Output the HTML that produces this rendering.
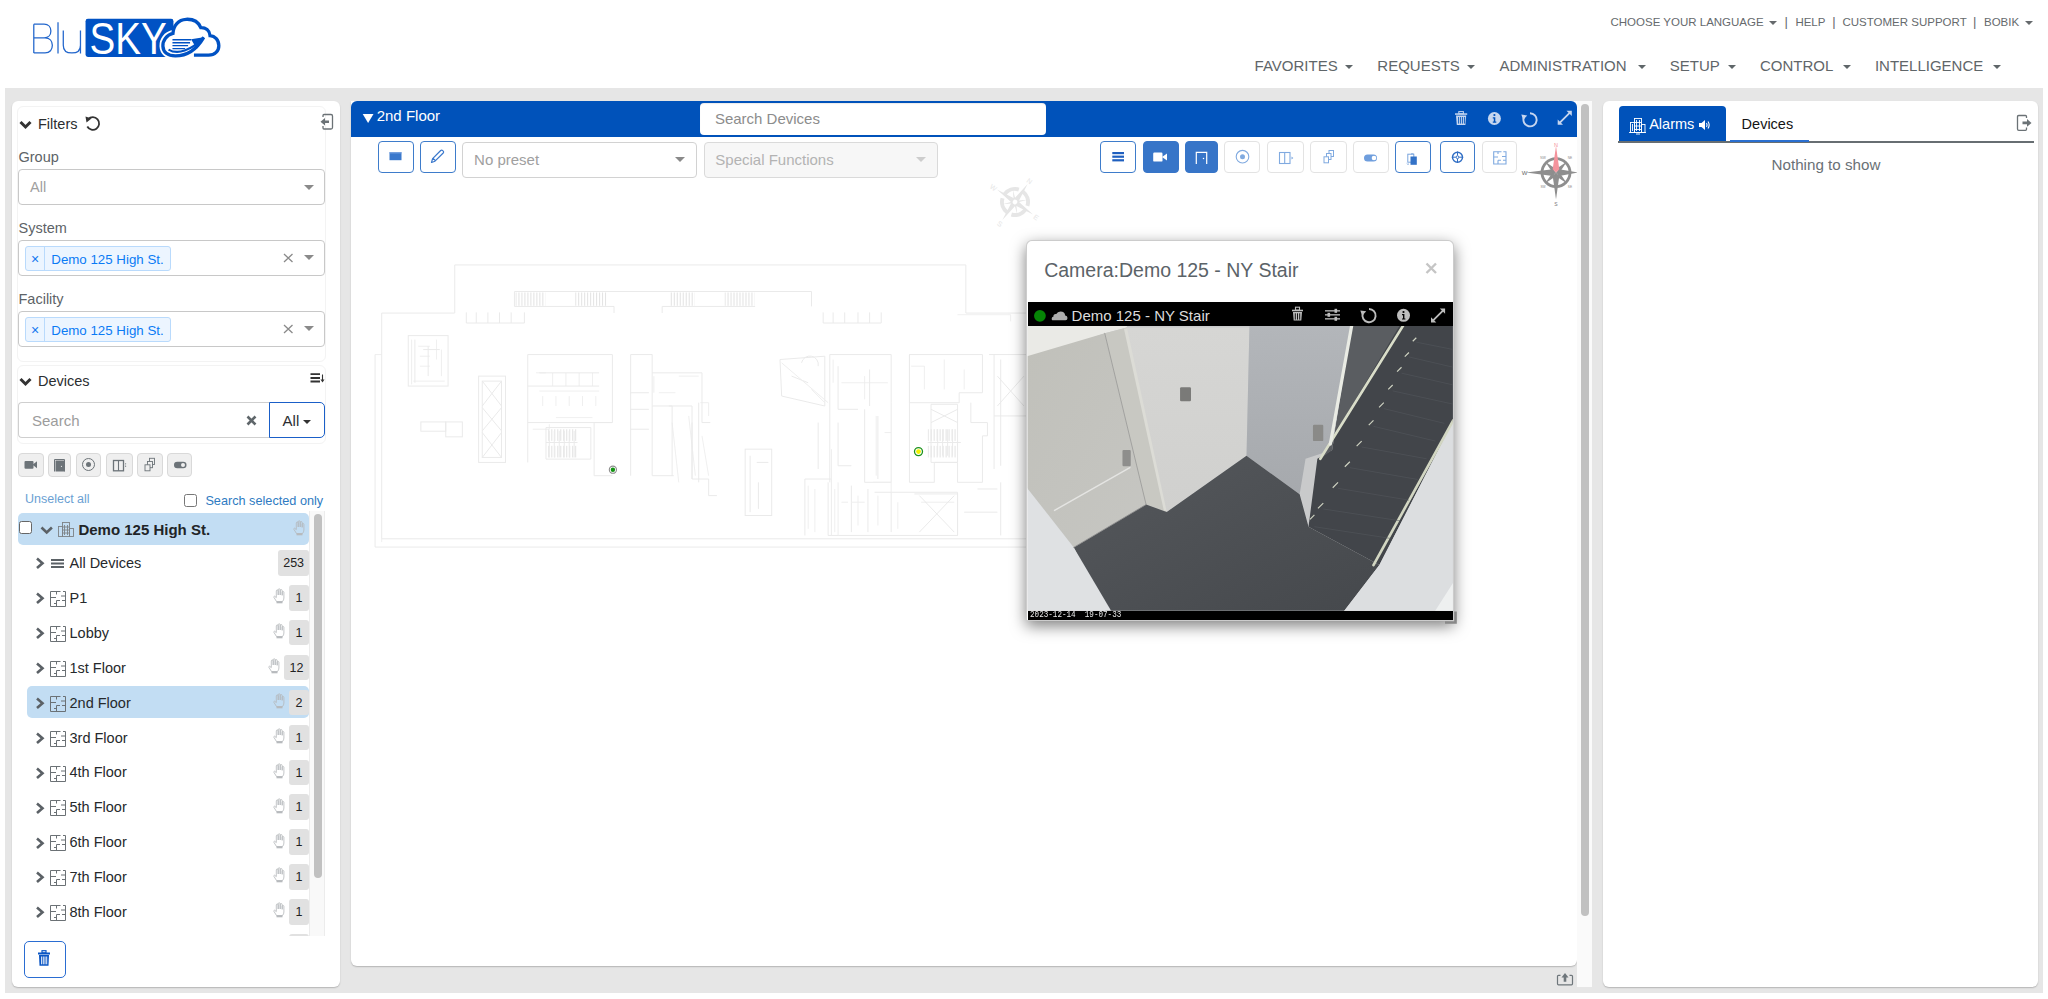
<!DOCTYPE html>
<html><head><meta charset="utf-8">
<style>
*{box-sizing:border-box;margin:0;padding:0}
html,body{width:2048px;height:999px;overflow:hidden;background:#fff;font-family:"Liberation Sans",sans-serif;position:relative}
.a{position:absolute;white-space:pre;line-height:1}
.nav{color:#5f6669;font-size:15px}
.tnav{color:#666a6d;font-size:11.5px}
.caret{position:absolute;width:0;height:0;border-left:4px solid transparent;border-right:4px solid transparent;border-top:4px solid #5f6669}
.panel{position:absolute;background:#fff;border-radius:6px;box-shadow:0 1px 1.5px rgba(0,0,0,.22)}
.lbl{color:#5d6367;font-size:14.5px}
.sel{position:absolute;border:1px solid #c8c8c8;border-radius:4px;background:#fff}
.tri{position:absolute;width:0;height:0;border-left:5px solid transparent;border-right:5px solid transparent;border-top:5px solid #8a8a8a}
.tag{position:absolute;background:#ecf5ff;border:1px solid #b9dafc;border-radius:3px;height:25px;width:146px}
.tagx{position:absolute;left:0;top:0;width:19px;height:23px;border-right:1px solid #b9dafc;color:#1577f0;font-size:14px;text-align:center;line-height:25px}
.tagt{position:absolute;left:25.3px;top:6px;color:#0a7bf5;font-size:13.3px;white-space:pre;line-height:1}
.row{position:absolute;left:0;width:300px;height:32px}
.rowt{position:absolute;left:69.5px;color:#26292c;font-size:14.5px;line-height:1;white-space:pre}
.badge{position:absolute;background:#e1e1e1;border-radius:3px;color:#222;font-size:12.5px;text-align:center;height:25.5px;line-height:27px}
.fbtn{position:absolute;top:453px;height:24px;background:#efefef;border:1px solid #d9d9d9;border-radius:4px}
.tbtn{position:absolute;top:141px;width:36px;height:32px;border-radius:4px;border:1.5px solid #3e7ccb;background:#fff}
.tbtn.f{background:#3775c8;border-color:#3775c8}
.tbtn.g{border:1px solid #e3e3e3}
</style></head><body>

<!-- LOGO -->
<svg class="a" style="left:25px;top:10px" width="200" height="55" viewBox="0 0 2048 563">
  <g fill="none" stroke="#2266cc" stroke-width="13">
    <path d="M90 145 V440 M90 145 H195 C240 145 265 175 265 215 C265 255 240 285 195 285 H90 M90 285 H205 C255 285 280 320 280 362 C280 405 255 440 205 440 H90"/>
    <path d="M338 125 V445"/>
    <path d="M392 210 V360 C392 410 425 440 480 440 C535 440 568 410 568 360 M568 210 V445"/>
  </g>
  <rect x="620" y="90" width="900" height="390" rx="24" fill="#0052c4"/>
  <text x="660" y="450" fill="#fff" font-family="Liberation Sans" font-size="455" textLength="790" lengthAdjust="spacingAndGlyphs">SKY</text>
  <path d="M1515 240 C1450 255 1410 310 1412 370 C1415 430 1460 470 1540 470" fill="none" stroke="#fff" stroke-width="70"/>
  <path d="M1730 462 H1880 C1945 462 1985 420 1985 365 C1985 305 1945 265 1895 262 C1890 210 1850 178 1800 180 C1775 120 1715 92 1650 95 C1570 98 1520 160 1515 240 C1450 255 1410 310 1412 370 C1415 430 1460 470 1540 470 C1660 470 1760 400 1830 280" fill="#fff" stroke="#0052c4" stroke-width="34"/>
  <path d="M1470 405 C1560 460 1700 420 1830 280" fill="none" stroke="#0052c4" stroke-width="22"/>
  <path d="M1830 280 L1700 300 L1760 400 Z" fill="#0052c4"/>
  <g stroke="#0052c4" stroke-width="14"><path d="M1510 305 H1700 M1510 335 H1690 M1510 365 H1670 M1510 395 H1640"/></g>
</svg>

<!-- TOP NAV -->
<div class="a tnav" style="left:1610.5px;top:16.5px">CHOOSE YOUR LANGUAGE</div>
<div class="caret" style="left:1769px;top:20.5px;border-top-color:#666a6d;border-left-width:4px;border-right-width:4px"></div>
<div class="a tnav" style="left:1784.5px;top:15px;font-size:13px">|</div>
<div class="a tnav" style="left:1795.4px;top:16.5px">HELP</div>
<div class="a tnav" style="left:1832.2px;top:15px;font-size:13px">|</div>
<div class="a tnav" style="left:1842.5px;top:16.5px">CUSTOMER SUPPORT</div>
<div class="a tnav" style="left:1973.1px;top:15px;font-size:13px">|</div>
<div class="a tnav" style="left:1984px;top:16.5px">BOBIK</div>
<div class="caret" style="left:2025px;top:20.5px;border-top-color:#666a6d"></div>

<div class="a nav" style="left:1254.6px;top:58px">FAVORITES</div><div class="caret" style="left:1345px;top:65px"></div>
<div class="a nav" style="left:1377.3px;top:58px">REQUESTS</div><div class="caret" style="left:1467px;top:65px"></div>
<div class="a nav" style="left:1499.4px;top:58px">ADMINISTRATION</div><div class="caret" style="left:1637.5px;top:65px"></div>
<div class="a nav" style="left:1669.8px;top:58px">SETUP</div><div class="caret" style="left:1727.6px;top:65px"></div>
<div class="a nav" style="left:1760px;top:58px">CONTROL</div><div class="caret" style="left:1843.3px;top:65px"></div>
<div class="a nav" style="left:1874.9px;top:58px">INTELLIGENCE</div><div class="caret" style="left:1993px;top:65px"></div>

<!-- GREY BG -->
<div class="a" style="left:5px;top:88px;width:2038px;height:905px;background:#e6e6e6"></div>

<!-- LEFT PANEL -->
<div class="panel" style="left:12px;top:101px;width:328px;height:886px"></div>
<div class="a faintbox" style="left:17px;top:106px;width:309px;height:256px;border:1px solid #f3f3f3;border-radius:6px"></div>
<div class="a faintbox" style="left:17px;top:365px;width:309px;height:79px;border:1px solid #f3f3f3;border-radius:6px"></div>
<!-- Filters header -->
<svg class="a" style="left:0;top:0" width="340" height="140">
  <polyline points="20.5,122 25.5,127 30.5,122" fill="none" stroke="#333" stroke-width="3"/>
  <path d="M88.2 119.2 A6.3 6.3 0 1 1 87.3 126.5" fill="none" stroke="#333" stroke-width="1.8"/>
  <path d="M85.5 116.5 L91.5 118.5 L86.5 122.5 Z" fill="#333"/>
  <path d="M323 117 V115.5 Q323 114.5 324 114.5 H331 Q332.5 114.5 332.5 116 V127.5 Q332.5 129 331 129 H324 Q323 129 323 128 V126" fill="none" stroke="#6b7276" stroke-width="1.3"/>
  <path d="M320.5 121.8 L325 118 V120.5 H329 V123 H325 V125.5 Z" fill="#6b7276"/>
</svg>
<div class="a" style="left:38px;top:116.7px;font-size:14.5px;color:#2b2e31">Filters</div>

<div class="a lbl" style="left:18.5px;top:149.7px">Group</div>
<div class="sel" style="left:18px;top:169px;width:307px;height:36px"></div>
<div class="a" style="left:30px;top:180.2px;font-size:14.5px;color:#a0a0a0">All</div>
<div class="tri" style="left:303.5px;top:184.5px"></div>

<div class="a lbl" style="left:18.5px;top:220.5px">System</div>
<div class="sel" style="left:18px;top:240px;width:307px;height:36px"></div>
<div class="tag" style="left:25px;top:246px"><div class="tagx">×</div><div class="tagt">Demo 125 High St.</div></div>
<svg class="a" style="left:283px;top:253px" width="12" height="10"><path d="M1 1 L9.5 9 M9.5 1 L1 9" stroke="#8a8a8a" stroke-width="1.3"/></svg>
<div class="tri" style="left:303.5px;top:255px"></div>

<div class="a lbl" style="left:18.5px;top:291.5px">Facility</div>
<div class="sel" style="left:18px;top:311px;width:307px;height:36px"></div>
<div class="tag" style="left:25px;top:317px"><div class="tagx">×</div><div class="tagt">Demo 125 High St.</div></div>
<svg class="a" style="left:283px;top:324px" width="12" height="10"><path d="M1 1 L9.5 9 M9.5 1 L1 9" stroke="#8a8a8a" stroke-width="1.3"/></svg>
<div class="tri" style="left:303.5px;top:326px"></div>

<!-- Devices header -->
<svg class="a" style="left:0;top:360px" width="340" height="40">
  <polyline points="20.5,19 25.5,24 30.5,19" fill="none" stroke="#333" stroke-width="3"/>
  <g stroke="#333" stroke-width="1.8"><path d="M310.5 14.2 H320 M310.5 18 H320 M310.5 21.5 H320"/></g>
  <path d="M322.5 14.5 V21" stroke="#333" stroke-width="1.1"/>
  <path d="M320.5 19.5 L322.5 22.5 L324.5 19.5 Z" fill="#333"/>
</svg>
<div class="a" style="left:38px;top:373.5px;font-size:14.5px;color:#2b2e31">Devices</div>

<!-- search group -->
<div class="a" style="left:18px;top:402px;width:252px;height:36px;border:1px solid #cfcfcf;border-right:none;border-radius:4px 0 0 4px;background:#fff"></div>
<div class="a" style="left:32px;top:413.1px;font-size:15px;color:#9c9c9c">Search</div>
<svg class="a" style="left:246px;top:415px" width="12" height="11"><path d="M1.5 1.5 L9.5 9.5 M9.5 1.5 L1.5 9.5" stroke="#5f666a" stroke-width="2.6"/></svg>
<div class="a" style="left:269px;top:402px;width:56px;height:36px;border:1.5px solid #1a5fc8;border-radius:0 5px 5px 0;background:#fff"></div>
<div class="a" style="left:282.6px;top:413.1px;font-size:15px;color:#2b2e31">All</div>
<div class="tri" style="left:303px;top:420px;border-top-color:#333;border-left-width:4px;border-right-width:4px;border-top-width:4px"></div>

<!-- filter icon buttons -->
<div class="fbtn" style="left:18px;width:26px"></div>
<div class="fbtn" style="left:48px;width:23px"></div>
<div class="fbtn" style="left:76px;width:25px"></div>
<div class="fbtn" style="left:106px;width:27px"></div>
<div class="fbtn" style="left:137px;width:26px"></div>
<div class="fbtn" style="left:167px;width:25px"></div>
<svg class="a" style="left:0;top:440px" width="340" height="45">
  <g fill="#6c7378">
    <rect x="24.5" y="21" width="9" height="7.8" rx="1"/><path d="M32.5 24.8 L37 21.3 V28.3 Z"/>
    <rect x="55.5" y="20.5" width="9" height="11"/>
    <circle cx="88.5" cy="24.5" r="2.5"/>
    <rect x="174" y="21.8" width="12.5" height="6.5" rx="3.25"/>
  </g>
  <path d="M54.5 31.5 V19.5 H64.5 V31.5" fill="none" stroke="#6c7378" stroke-width="1"/>
  <circle cx="61.5" cy="26.3" r="0.6" fill="#efefef"/>
  <circle cx="88.5" cy="24.5" r="6" fill="none" stroke="#6c7378" stroke-width="1"/>
  <rect x="113.5" y="20.5" width="10" height="10.3" fill="none" stroke="#6c7378" stroke-width="1.3"/>
  <path d="M118.5 20.5 V30.8" stroke="#6c7378" stroke-width="1.1"/>
  <circle cx="125.6" cy="23.8" r="0.6" fill="#6c7378"/><circle cx="125.6" cy="26.2" r="0.6" fill="#6c7378"/>
  <g fill="#efefef" stroke="#6c7378" stroke-width="0.9"><rect x="149.5" y="18.3" width="5" height="6.2"/><rect x="147.5" y="21.5" width="5" height="6.2"/><rect x="145" y="24.8" width="5" height="6"/></g>
  <circle cx="183" cy="25" r="2" fill="#efefef"/>
</svg>

<div class="a" style="left:25px;top:493.3px;font-size:12.5px;color:#6b9fd3">Unselect all</div>
<div class="a" style="left:184px;top:493.5px;width:13px;height:13px;border:1px solid #777;border-radius:2.5px;background:#fff"></div>
<div class="a" style="left:205.4px;top:494.8px;font-size:12.7px;color:#2e7bc2">Search selected only</div>

<!-- tree -->
<div class="a" style="left:309px;top:511px;width:16px;height:425px;background:#f9f9f9;border-left:1px solid #ececec;border-right:1px solid #ececec"></div>
<div class="a" style="left:314px;top:514px;width:8px;height:364px;background:#c1c1c1;border-radius:4px"></div>

<div class="a" style="left:18px;top:513px;width:291px;height:31.6px;background:#c2ddf3;border-radius:5px"></div>
<div class="a" style="left:18.5px;top:521px;width:13px;height:13px;border:1px solid #666;border-radius:2.5px;background:#fff"></div>
<div class="a" style="left:78.4px;top:521.5px;font-size:15px;font-weight:700;color:#212427">Demo 125 High St.</div>
<div class="a" style="left:27px;top:686.4px;width:282px;height:31.4px;background:#c2ddf3;border-radius:5px"></div>
<div class="a" style="left:18px;top:545px;width:291px;height:390.6px;overflow:hidden"><div class="a" style="left:-18px;top:-545px;width:340px;height:1000px"><svg class="a" style="left:34px;top:556.3px" width="14" height="15"><polyline points="3,2.5 8.5,7.2 3,12" fill="none" stroke="#5b6166" stroke-width="2.6"/></svg>
<svg class="a" style="left:50px;top:558.3px" width="15" height="11"><g stroke="#5b6166" stroke-width="2"><path d="M1 2 H14 M1 5.5 H14 M1 9 H14"/></g></svg>
<div class="rowt a" style="top:556.0px">All Devices</div>
<div class="badge" style="left:278.3px;top:550.1px;width:30.7px">253</div>
<svg class="a" style="left:34px;top:591.2px" width="14" height="15"><polyline points="3,2.5 8.5,7.2 3,12" fill="none" stroke="#5b6166" stroke-width="2.6"/></svg>
<svg class="a" style="left:49.5px;top:591.0px" width="16" height="16" viewBox="0 0 16 16"><g fill="none" stroke="#6b7175" stroke-width="1"><path d="M10.5 0.5 H0.5 V15.5 H15.5 V0.5 H13"/><path d="M6.5 0.5 V3.5 M0.5 6.5 H6 M11 5 H15.5 M6.5 9.5 H10 M12 9.5 H15.5 M6.5 9.5 V15.5 M4 12.5 H6.5"/></g></svg>
<div class="rowt a" style="top:590.9px">P1</div>
<div class="badge" style="left:289.2px;top:585.0px;width:19.8px">1</div>
<svg class="a" style="left:272.7px;top:588.2px" width="12" height="16" viewBox="0 0 12 16"><path d="M3.5 13.5 L1 9.5 Q0.5 8.3 1.6 8.2 L3.3 9.6 V3 Q3.3 2 4.3 2 Q5.2 2 5.2 3 V7 V1.8 Q5.2 0.8 6.2 0.8 Q7.2 0.8 7.2 1.8 V7 V2.6 Q7.2 1.6 8.2 1.6 Q9.2 1.6 9.2 2.6 V7.3 V4.3 Q9.2 3.5 10 3.5 Q10.9 3.5 10.9 4.3 V10 Q10.9 12 9.5 13.5 Z" fill="none" stroke="#b4b7ba" stroke-width="0.8"/><rect x="3.5" y="13.3" width="6" height="2" fill="#b7babd"/></svg>
<svg class="a" style="left:34px;top:626.1px" width="14" height="15"><polyline points="3,2.5 8.5,7.2 3,12" fill="none" stroke="#5b6166" stroke-width="2.6"/></svg>
<svg class="a" style="left:49.5px;top:625.9px" width="16" height="16" viewBox="0 0 16 16"><g fill="none" stroke="#6b7175" stroke-width="1"><path d="M10.5 0.5 H0.5 V15.5 H15.5 V0.5 H13"/><path d="M6.5 0.5 V3.5 M0.5 6.5 H6 M11 5 H15.5 M6.5 9.5 H10 M12 9.5 H15.5 M6.5 9.5 V15.5 M4 12.5 H6.5"/></g></svg>
<div class="rowt a" style="top:625.8px">Lobby</div>
<div class="badge" style="left:289.2px;top:619.9px;width:19.8px">1</div>
<svg class="a" style="left:272.7px;top:623.1px" width="12" height="16" viewBox="0 0 12 16"><path d="M3.5 13.5 L1 9.5 Q0.5 8.3 1.6 8.2 L3.3 9.6 V3 Q3.3 2 4.3 2 Q5.2 2 5.2 3 V7 V1.8 Q5.2 0.8 6.2 0.8 Q7.2 0.8 7.2 1.8 V7 V2.6 Q7.2 1.6 8.2 1.6 Q9.2 1.6 9.2 2.6 V7.3 V4.3 Q9.2 3.5 10 3.5 Q10.9 3.5 10.9 4.3 V10 Q10.9 12 9.5 13.5 Z" fill="none" stroke="#b4b7ba" stroke-width="0.8"/><rect x="3.5" y="13.3" width="6" height="2" fill="#b7babd"/></svg>
<svg class="a" style="left:34px;top:661.0px" width="14" height="15"><polyline points="3,2.5 8.5,7.2 3,12" fill="none" stroke="#5b6166" stroke-width="2.6"/></svg>
<svg class="a" style="left:49.5px;top:660.8px" width="16" height="16" viewBox="0 0 16 16"><g fill="none" stroke="#6b7175" stroke-width="1"><path d="M10.5 0.5 H0.5 V15.5 H15.5 V0.5 H13"/><path d="M6.5 0.5 V3.5 M0.5 6.5 H6 M11 5 H15.5 M6.5 9.5 H10 M12 9.5 H15.5 M6.5 9.5 V15.5 M4 12.5 H6.5"/></g></svg>
<div class="rowt a" style="top:660.7px">1st Floor</div>
<div class="badge" style="left:284.0px;top:654.8px;width:25px">12</div>
<svg class="a" style="left:267.5px;top:658.0px" width="12" height="16" viewBox="0 0 12 16"><path d="M3.5 13.5 L1 9.5 Q0.5 8.3 1.6 8.2 L3.3 9.6 V3 Q3.3 2 4.3 2 Q5.2 2 5.2 3 V7 V1.8 Q5.2 0.8 6.2 0.8 Q7.2 0.8 7.2 1.8 V7 V2.6 Q7.2 1.6 8.2 1.6 Q9.2 1.6 9.2 2.6 V7.3 V4.3 Q9.2 3.5 10 3.5 Q10.9 3.5 10.9 4.3 V10 Q10.9 12 9.5 13.5 Z" fill="none" stroke="#b4b7ba" stroke-width="0.8"/><rect x="3.5" y="13.3" width="6" height="2" fill="#b7babd"/></svg>
<svg class="a" style="left:34px;top:695.9px" width="14" height="15"><polyline points="3,2.5 8.5,7.2 3,12" fill="none" stroke="#5b6166" stroke-width="2.6"/></svg>
<svg class="a" style="left:49.5px;top:695.7px" width="16" height="16" viewBox="0 0 16 16"><g fill="none" stroke="#6b7175" stroke-width="1"><path d="M10.5 0.5 H0.5 V15.5 H15.5 V0.5 H13"/><path d="M6.5 0.5 V3.5 M0.5 6.5 H6 M11 5 H15.5 M6.5 9.5 H10 M12 9.5 H15.5 M6.5 9.5 V15.5 M4 12.5 H6.5"/></g></svg>
<div class="rowt a" style="top:695.6px">2nd Floor</div>
<div class="badge" style="left:289.2px;top:689.7px;width:19.8px">2</div>
<svg class="a" style="left:272.7px;top:692.9px" width="12" height="16" viewBox="0 0 12 16"><path d="M3.5 13.5 L1 9.5 Q0.5 8.3 1.6 8.2 L3.3 9.6 V3 Q3.3 2 4.3 2 Q5.2 2 5.2 3 V7 V1.8 Q5.2 0.8 6.2 0.8 Q7.2 0.8 7.2 1.8 V7 V2.6 Q7.2 1.6 8.2 1.6 Q9.2 1.6 9.2 2.6 V7.3 V4.3 Q9.2 3.5 10 3.5 Q10.9 3.5 10.9 4.3 V10 Q10.9 12 9.5 13.5 Z" fill="none" stroke="#b4b7ba" stroke-width="0.8"/><rect x="3.5" y="13.3" width="6" height="2" fill="#b7babd"/></svg>
<svg class="a" style="left:34px;top:730.8px" width="14" height="15"><polyline points="3,2.5 8.5,7.2 3,12" fill="none" stroke="#5b6166" stroke-width="2.6"/></svg>
<svg class="a" style="left:49.5px;top:730.6px" width="16" height="16" viewBox="0 0 16 16"><g fill="none" stroke="#6b7175" stroke-width="1"><path d="M10.5 0.5 H0.5 V15.5 H15.5 V0.5 H13"/><path d="M6.5 0.5 V3.5 M0.5 6.5 H6 M11 5 H15.5 M6.5 9.5 H10 M12 9.5 H15.5 M6.5 9.5 V15.5 M4 12.5 H6.5"/></g></svg>
<div class="rowt a" style="top:730.5px">3rd Floor</div>
<div class="badge" style="left:289.2px;top:724.6px;width:19.8px">1</div>
<svg class="a" style="left:272.7px;top:727.8px" width="12" height="16" viewBox="0 0 12 16"><path d="M3.5 13.5 L1 9.5 Q0.5 8.3 1.6 8.2 L3.3 9.6 V3 Q3.3 2 4.3 2 Q5.2 2 5.2 3 V7 V1.8 Q5.2 0.8 6.2 0.8 Q7.2 0.8 7.2 1.8 V7 V2.6 Q7.2 1.6 8.2 1.6 Q9.2 1.6 9.2 2.6 V7.3 V4.3 Q9.2 3.5 10 3.5 Q10.9 3.5 10.9 4.3 V10 Q10.9 12 9.5 13.5 Z" fill="none" stroke="#b4b7ba" stroke-width="0.8"/><rect x="3.5" y="13.3" width="6" height="2" fill="#b7babd"/></svg>
<svg class="a" style="left:34px;top:765.7px" width="14" height="15"><polyline points="3,2.5 8.5,7.2 3,12" fill="none" stroke="#5b6166" stroke-width="2.6"/></svg>
<svg class="a" style="left:49.5px;top:765.5px" width="16" height="16" viewBox="0 0 16 16"><g fill="none" stroke="#6b7175" stroke-width="1"><path d="M10.5 0.5 H0.5 V15.5 H15.5 V0.5 H13"/><path d="M6.5 0.5 V3.5 M0.5 6.5 H6 M11 5 H15.5 M6.5 9.5 H10 M12 9.5 H15.5 M6.5 9.5 V15.5 M4 12.5 H6.5"/></g></svg>
<div class="rowt a" style="top:765.4px">4th Floor</div>
<div class="badge" style="left:289.2px;top:759.5px;width:19.8px">1</div>
<svg class="a" style="left:272.7px;top:762.7px" width="12" height="16" viewBox="0 0 12 16"><path d="M3.5 13.5 L1 9.5 Q0.5 8.3 1.6 8.2 L3.3 9.6 V3 Q3.3 2 4.3 2 Q5.2 2 5.2 3 V7 V1.8 Q5.2 0.8 6.2 0.8 Q7.2 0.8 7.2 1.8 V7 V2.6 Q7.2 1.6 8.2 1.6 Q9.2 1.6 9.2 2.6 V7.3 V4.3 Q9.2 3.5 10 3.5 Q10.9 3.5 10.9 4.3 V10 Q10.9 12 9.5 13.5 Z" fill="none" stroke="#b4b7ba" stroke-width="0.8"/><rect x="3.5" y="13.3" width="6" height="2" fill="#b7babd"/></svg>
<svg class="a" style="left:34px;top:800.6px" width="14" height="15"><polyline points="3,2.5 8.5,7.2 3,12" fill="none" stroke="#5b6166" stroke-width="2.6"/></svg>
<svg class="a" style="left:49.5px;top:800.4px" width="16" height="16" viewBox="0 0 16 16"><g fill="none" stroke="#6b7175" stroke-width="1"><path d="M10.5 0.5 H0.5 V15.5 H15.5 V0.5 H13"/><path d="M6.5 0.5 V3.5 M0.5 6.5 H6 M11 5 H15.5 M6.5 9.5 H10 M12 9.5 H15.5 M6.5 9.5 V15.5 M4 12.5 H6.5"/></g></svg>
<div class="rowt a" style="top:800.3px">5th Floor</div>
<div class="badge" style="left:289.2px;top:794.4px;width:19.8px">1</div>
<svg class="a" style="left:272.7px;top:797.6px" width="12" height="16" viewBox="0 0 12 16"><path d="M3.5 13.5 L1 9.5 Q0.5 8.3 1.6 8.2 L3.3 9.6 V3 Q3.3 2 4.3 2 Q5.2 2 5.2 3 V7 V1.8 Q5.2 0.8 6.2 0.8 Q7.2 0.8 7.2 1.8 V7 V2.6 Q7.2 1.6 8.2 1.6 Q9.2 1.6 9.2 2.6 V7.3 V4.3 Q9.2 3.5 10 3.5 Q10.9 3.5 10.9 4.3 V10 Q10.9 12 9.5 13.5 Z" fill="none" stroke="#b4b7ba" stroke-width="0.8"/><rect x="3.5" y="13.3" width="6" height="2" fill="#b7babd"/></svg>
<svg class="a" style="left:34px;top:835.5px" width="14" height="15"><polyline points="3,2.5 8.5,7.2 3,12" fill="none" stroke="#5b6166" stroke-width="2.6"/></svg>
<svg class="a" style="left:49.5px;top:835.3px" width="16" height="16" viewBox="0 0 16 16"><g fill="none" stroke="#6b7175" stroke-width="1"><path d="M10.5 0.5 H0.5 V15.5 H15.5 V0.5 H13"/><path d="M6.5 0.5 V3.5 M0.5 6.5 H6 M11 5 H15.5 M6.5 9.5 H10 M12 9.5 H15.5 M6.5 9.5 V15.5 M4 12.5 H6.5"/></g></svg>
<div class="rowt a" style="top:835.2px">6th Floor</div>
<div class="badge" style="left:289.2px;top:829.3px;width:19.8px">1</div>
<svg class="a" style="left:272.7px;top:832.5px" width="12" height="16" viewBox="0 0 12 16"><path d="M3.5 13.5 L1 9.5 Q0.5 8.3 1.6 8.2 L3.3 9.6 V3 Q3.3 2 4.3 2 Q5.2 2 5.2 3 V7 V1.8 Q5.2 0.8 6.2 0.8 Q7.2 0.8 7.2 1.8 V7 V2.6 Q7.2 1.6 8.2 1.6 Q9.2 1.6 9.2 2.6 V7.3 V4.3 Q9.2 3.5 10 3.5 Q10.9 3.5 10.9 4.3 V10 Q10.9 12 9.5 13.5 Z" fill="none" stroke="#b4b7ba" stroke-width="0.8"/><rect x="3.5" y="13.3" width="6" height="2" fill="#b7babd"/></svg>
<svg class="a" style="left:34px;top:870.4px" width="14" height="15"><polyline points="3,2.5 8.5,7.2 3,12" fill="none" stroke="#5b6166" stroke-width="2.6"/></svg>
<svg class="a" style="left:49.5px;top:870.2px" width="16" height="16" viewBox="0 0 16 16"><g fill="none" stroke="#6b7175" stroke-width="1"><path d="M10.5 0.5 H0.5 V15.5 H15.5 V0.5 H13"/><path d="M6.5 0.5 V3.5 M0.5 6.5 H6 M11 5 H15.5 M6.5 9.5 H10 M12 9.5 H15.5 M6.5 9.5 V15.5 M4 12.5 H6.5"/></g></svg>
<div class="rowt a" style="top:870.1px">7th Floor</div>
<div class="badge" style="left:289.2px;top:864.2px;width:19.8px">1</div>
<svg class="a" style="left:272.7px;top:867.4px" width="12" height="16" viewBox="0 0 12 16"><path d="M3.5 13.5 L1 9.5 Q0.5 8.3 1.6 8.2 L3.3 9.6 V3 Q3.3 2 4.3 2 Q5.2 2 5.2 3 V7 V1.8 Q5.2 0.8 6.2 0.8 Q7.2 0.8 7.2 1.8 V7 V2.6 Q7.2 1.6 8.2 1.6 Q9.2 1.6 9.2 2.6 V7.3 V4.3 Q9.2 3.5 10 3.5 Q10.9 3.5 10.9 4.3 V10 Q10.9 12 9.5 13.5 Z" fill="none" stroke="#b4b7ba" stroke-width="0.8"/><rect x="3.5" y="13.3" width="6" height="2" fill="#b7babd"/></svg>
<svg class="a" style="left:34px;top:905.3px" width="14" height="15"><polyline points="3,2.5 8.5,7.2 3,12" fill="none" stroke="#5b6166" stroke-width="2.6"/></svg>
<svg class="a" style="left:49.5px;top:905.1px" width="16" height="16" viewBox="0 0 16 16"><g fill="none" stroke="#6b7175" stroke-width="1"><path d="M10.5 0.5 H0.5 V15.5 H15.5 V0.5 H13"/><path d="M6.5 0.5 V3.5 M0.5 6.5 H6 M11 5 H15.5 M6.5 9.5 H10 M12 9.5 H15.5 M6.5 9.5 V15.5 M4 12.5 H6.5"/></g></svg>
<div class="rowt a" style="top:905.0px">8th Floor</div>
<div class="badge" style="left:289.2px;top:899.1px;width:19.8px">1</div>
<svg class="a" style="left:272.7px;top:902.3px" width="12" height="16" viewBox="0 0 12 16"><path d="M3.5 13.5 L1 9.5 Q0.5 8.3 1.6 8.2 L3.3 9.6 V3 Q3.3 2 4.3 2 Q5.2 2 5.2 3 V7 V1.8 Q5.2 0.8 6.2 0.8 Q7.2 0.8 7.2 1.8 V7 V2.6 Q7.2 1.6 8.2 1.6 Q9.2 1.6 9.2 2.6 V7.3 V4.3 Q9.2 3.5 10 3.5 Q10.9 3.5 10.9 4.3 V10 Q10.9 12 9.5 13.5 Z" fill="none" stroke="#b4b7ba" stroke-width="0.8"/><rect x="3.5" y="13.3" width="6" height="2" fill="#b7babd"/></svg>
<svg class="a" style="left:34px;top:940.2px" width="14" height="15"><polyline points="3,2.5 8.5,7.2 3,12" fill="none" stroke="#5b6166" stroke-width="2.6"/></svg>
<svg class="a" style="left:49.5px;top:940.0px" width="16" height="16" viewBox="0 0 16 16"><g fill="none" stroke="#6b7175" stroke-width="1"><path d="M10.5 0.5 H0.5 V15.5 H15.5 V0.5 H13"/><path d="M6.5 0.5 V3.5 M0.5 6.5 H6 M11 5 H15.5 M6.5 9.5 H10 M12 9.5 H15.5 M6.5 9.5 V15.5 M4 12.5 H6.5"/></g></svg>
<div class="rowt a" style="top:939.9px">9th Floor</div>
<div class="badge" style="left:289.2px;top:934.0px;width:19.8px">1</div>
<svg class="a" style="left:272.7px;top:937.2px" width="12" height="16" viewBox="0 0 12 16"><path d="M3.5 13.5 L1 9.5 Q0.5 8.3 1.6 8.2 L3.3 9.6 V3 Q3.3 2 4.3 2 Q5.2 2 5.2 3 V7 V1.8 Q5.2 0.8 6.2 0.8 Q7.2 0.8 7.2 1.8 V7 V2.6 Q7.2 1.6 8.2 1.6 Q9.2 1.6 9.2 2.6 V7.3 V4.3 Q9.2 3.5 10 3.5 Q10.9 3.5 10.9 4.3 V10 Q10.9 12 9.5 13.5 Z" fill="none" stroke="#b4b7ba" stroke-width="0.8"/><rect x="3.5" y="13.3" width="6" height="2" fill="#b7babd"/></svg></div></div>
<svg class="a" style="left:38px;top:522px" width="40" height="16">
<polyline points="3.5,5.5 8.7,10.5 13.9,5.5" fill="none" stroke="#5b6166" stroke-width="2.6"/>
<g fill="none" stroke="#7d8286" stroke-width="0.9"><rect x="24.5" y="0.5" width="7" height="14"/><rect x="20.5" y="4.5" width="4" height="10"/><rect x="31.5" y="6.5" width="4" height="8"/>
<path d="M26.5 3 V13 M29.5 3 V13 M25 5 H31 M25 8 H31 M25 11 H31"/></g></svg>
<svg class="a" style="left:293.0px;top:519.5px" width="12" height="16" viewBox="0 0 12 16"><path d="M3.5 13.5 L1 9.5 Q0.5 8.3 1.6 8.2 L3.3 9.6 V3 Q3.3 2 4.3 2 Q5.2 2 5.2 3 V7 V1.8 Q5.2 0.8 6.2 0.8 Q7.2 0.8 7.2 1.8 V7 V2.6 Q7.2 1.6 8.2 1.6 Q9.2 1.6 9.2 2.6 V7.3 V4.3 Q9.2 3.5 10 3.5 Q10.9 3.5 10.9 4.3 V10 Q10.9 12 9.5 13.5 Z" fill="none" stroke="#b4b7ba" stroke-width="0.8"/><rect x="3.5" y="13.3" width="6" height="2" fill="#b7babd"/></svg>
<div class="a" style="left:23.5px;top:941px;width:42.5px;height:36.5px;border:1.5px solid #2a6dd2;border-radius:5px;background:#fff"></div>
<svg class="a" style="left:37px;top:950px" width="15" height="17" viewBox="0 0 15 17"><g fill="#0b56c4"><rect x="1" y="2.5" width="12" height="2"/><rect x="5" y="0.7" width="4" height="2.2" fill="none" stroke="#0b56c4" stroke-width="1.2"/><path d="M2 5 H12 L11.5 15.7 H2.5 Z"/></g><g stroke="#fff" stroke-width="0.9"><path d="M4.6 6.5 V14.3 M6.3 6.5 V14.3 M8 6.5 V14.3 M9.7 6.5 V14.3"/></g></svg>


<!-- MIDDLE PANEL -->
<div class="panel" style="left:351px;top:101px;width:1226px;height:865px;border-radius:0 0 6px 6px"></div>
<!-- header -->
<div class="a" style="left:351px;top:101px;width:1226px;height:36px;background:#0052ba;border-radius:6px 6px 0 0"></div>
<svg class="a" style="left:360px;top:110px" width="16" height="16"><path d="M2.7 4 H13.5 L8.1 13 Z" fill="#fff"/></svg>
<div class="a" style="left:376.7px;top:108.2px;font-size:15px;color:#fff">2nd Floor</div>
<div class="a" style="left:700px;top:103px;width:346px;height:31.6px;background:#fff;border-radius:4px;box-shadow:inset 0 1px 1px rgba(0,0,0,.08)"></div>
<div class="a" style="left:714.9px;top:111.4px;font-size:15px;color:#8c8c8c">Search Devices</div>
<svg class="a" style="left:1440px;top:105px" width="140" height="28">
 <g fill="#c6d6ef">
  <rect x="15" y="8.3" width="12.2" height="1.5"/><rect x="18.8" y="6.6" width="4.6" height="2.2" fill="none" stroke="#c6d6ef" stroke-width="1"/>
  <path d="M16 10.5 H26.2 L25.4 20 H16.8 Z"/>
  <circle cx="54.4" cy="13.5" r="6.5"/>
  <path d="M117.7 19.8 V14.5 L119.7 16.5 L128.5 7.7 L126.5 5.7 H131.8 V11 L129.8 9 L121 17.8 L123 19.8 Z"/>
 </g>
 <g fill="#0052ba"><circle cx="54.4" cy="10" r="1.1"/><path d="M52.8 12.3 H55.3 V16.6 H56.3 V17.8 H52.8 V16.6 H53.8 V13.5 H52.8 Z"/></g>
 <g stroke="#0052ba" stroke-width="0.9"><path d="M18.6 12 V18.6 M20.6 12 V18.6 M22.6 12 V18.6 M24.6 12 V18.6"/></g>
 <path d="M90 8.2 A6.6 6.6 0 1 1 83.8 12.6" fill="none" stroke="#c6d6ef" stroke-width="1.9"/>
 <path d="M81.3 9.6 L87.2 10.4 L83.2 15 Z" fill="#c6d6ef"/>
</svg>

<!-- toolbar left -->
<div class="tbtn" style="left:378px;width:35.7px;height:31.6px"></div>
<div class="tbtn" style="left:420.1px;width:35.7px;height:31.6px"></div>
<svg class="a" style="left:378px;top:141px" width="80" height="33">
 <rect x="11.5" y="11.2" width="12" height="8" fill="#3a78cc"/>
 <rect x="11.5" y="11.2" width="12" height="1.2" fill="#7aa3e0"/>
 <path d="M53.5 21.5 L54.6 17.6 L62.7 9.5 Q63.7 8.6 64.7 9.6 L65.2 10.1 Q66.1 11 65.2 12 L57 20.2 Z M55.1 17.3 L57.2 19.5" fill="none" stroke="#3a78cc" stroke-width="1.2" stroke-linejoin="round"/>
</svg>
<div class="sel" style="left:462.2px;top:141.7px;width:234.4px;height:35.9px;border-color:#d2d2d2"></div>
<div class="a" style="left:474.1px;top:152.3px;font-size:15px;color:#a0a0a0">No preset</div>
<div class="tri" style="left:675px;top:157px"></div>
<div class="sel" style="left:703.8px;top:141.7px;width:234.5px;height:35.9px;background:#f7f7f7;border-color:#dadada"></div>
<div class="a" style="left:715.3px;top:152.3px;font-size:15px;color:#b3b3b3">Special Functions</div>
<div class="tri" style="left:915.5px;top:157px;border-top-color:#cdcdcd"></div>

<!-- toolbar right -->
<div class="tbtn" style="left:1100.3px"></div>
<div class="tbtn f" style="left:1142.5px"></div>
<div class="tbtn f" style="left:1184.7px;width:33.2px"></div>
<div class="tbtn g" style="left:1224.2px"></div>
<div class="tbtn g" style="left:1267.1px;width:36.8px"></div>
<div class="tbtn g" style="left:1310.2px;width:36.4px"></div>
<div class="tbtn g" style="left:1352.8px;width:35.8px"></div>
<div class="tbtn" style="left:1395.1px;width:35.8px"></div>
<div class="tbtn" style="left:1439.8px;width:35.2px"></div>
<div class="tbtn g" style="left:1481.5px;width:35.2px"></div>
<svg class="a" style="left:1095px;top:135px" width="430" height="45">
 <g fill="#1f5fbf"><rect x="17.3" y="17" width="11.7" height="2.2"/><rect x="17.3" y="20.6" width="11.7" height="2.2"/><rect x="17.3" y="24.2" width="11.7" height="2.2"/></g>
 <g fill="#fff"><rect x="58.2" y="17.6" width="9.3" height="9" rx="1.2"/><path d="M67 22 L72 18.5 V25.6 Z"/>
  </g>
 <path d="M101.3 29 V17.3 H111.7 V29" fill="none" stroke="#fff" stroke-width="1.2"/>
 <circle cx="108.5" cy="23.6" r="0.75" fill="#fff"/>
 <circle cx="147.5" cy="21.7" r="6.3" fill="none" stroke="#80aae0" stroke-width="1.1"/>
 <circle cx="147.5" cy="21.7" r="2.5" fill="#80aae0"/>
 <g fill="none" stroke="#80aae0" stroke-width="1.1"><rect x="184.5" y="17.5" width="10.5" height="11"/><path d="M189.7 17.5 V28.5"/></g><g fill="#fff" stroke="#80aae0" stroke-width="1"><rect x="234" y="15.5" width="4.5" height="6"/><rect x="231.5" y="18.5" width="4.5" height="6"/><rect x="229" y="21.8" width="4.5" height="6"/></g>
 <path d="M196.5 21.5 L198.3 23 L196.5 24.5 Z" fill="#80aae0"/>
 <rect x="269" y="19.5" width="13" height="7" rx="3.5" fill="#6f9edd"/><circle cx="279" cy="23" r="2.3" fill="#fff"/>
 <rect x="312.8" y="19.2" width="6" height="8" fill="none" stroke="#7ba5dd" stroke-width="1"/>
 <rect x="315.5" y="21.5" width="6.3" height="8.3" fill="#3372c7"/>
 <path d="M316 19 Q317.5 18 318.8 19.2 M314 29 Q312.5 29.8 311.7 28.4" fill="none" stroke="#7ba5dd" stroke-width="0.9"/>
 <circle cx="362.5" cy="22.2" r="5" fill="none" stroke="#2f6dc4" stroke-width="1.4"/>
 <circle cx="362.5" cy="22.2" r="1.4" fill="none" stroke="#2f6dc4" stroke-width="1"/>
 <path d="M362.5 16.5 V20.5 M362.5 24 V28 M356.8 22.2 H360.8 M364.2 22.2 H368.2" stroke="#2f6dc4" stroke-width="1"/>
 <g fill="none" stroke="#80aae0" stroke-width="1.1" transform="translate(-6 0)"><path d="M412.5 16.8 H404.7 V29 H417 V16.8 H414.3"/><path d="M409 16.8 V19 M404.7 22 H409 M413 21.5 H417 M409 25.3 H412 M414 25.3 H417 M409 25.3 V29"/></g>
</svg>

<!-- compass right -->
<svg class="a" style="left:1520px;top:140px" width="60" height="66" viewBox="0 0 60 66">
 <circle cx="36" cy="32.6" r="14" fill="none" stroke="#8e8e8e" stroke-width="2.8"/>
 <g fill="#8e8e8e">
  <path d="M36 59.5 L39.3 35.9 L36 32.6 L32.7 35.9 Z"/>
  <path d="M6 32.6 L32.7 29.3 L36 32.6 L32.7 35.9 Z"/>
  <path d="M58 32.6 L39.3 29.3 L36 32.6 L39.3 35.9 Z"/>
  <path d="M25 21.6 L38 30.5 L34 34.7 Z M47 21.6 L33.9 30.5 L38.1 34.7 Z M25 43.6 L38 34.7 L34 30.5 Z M47 43.6 L33.9 34.7 L38.1 30.5 Z"/>
 </g>
 <path d="M36 6 L39.3 29.3 L36 32.6 L32.7 29.3 Z" fill="#f4939c"/>
 <text x="36" y="6.5" font-size="5.5" fill="#f4939c" text-anchor="middle" font-family="Liberation Sans">N</text>
 <text x="36" y="66" font-size="5" fill="#777" text-anchor="middle" font-family="Liberation Sans">S</text>
 <text x="4.5" y="35" font-size="6" fill="#666" text-anchor="middle" font-family="Liberation Sans">W</text>
 <g font-size="3.2" fill="#888" font-family="Liberation Sans" text-anchor="middle"><text x="23" y="19">NW</text><text x="50" y="19">NE</text><text x="23" y="48">SW</text><text x="50" y="48">SE</text></g>
</svg>

<!-- scrollbar middle -->
<div class="a" style="left:1577px;top:101px;width:14.7px;height:886px;background:#fafafa"></div>
<div class="a" style="left:1581px;top:104px;width:8px;height:812px;background:#c1c1c1;border-radius:4px"></div>
<!-- upload icon -->
<svg class="a" style="left:1555px;top:971px" width="20" height="18" viewBox="0 0 20 18">
 <path d="M5.5 4.3 H3.5 Q2.5 4.3 2.5 5.3 V12.8 Q2.5 13.8 3.5 13.8 H16.5 Q17.5 13.8 17.5 12.8 V5.3 Q17.5 4.3 16.5 4.3 H14.5" fill="none" stroke="#6e767b" stroke-width="1.2"/>
 <path d="M10 2 L13.5 6.5 H11.3 V10.8 H8.7 V6.5 H6.5 Z" fill="#6e767b"/>
</svg>
<svg class="a" style="left:360px;top:250px" width="680" height="310" viewBox="0 0 2048 934">
<defs><pattern id="hatch" width="9" height="10" patternUnits="userSpaceOnUse"><rect width="3" height="10" fill="#e2e2e2"/></pattern></defs>
<g fill="url(#hatch)"><rect x="468" y="128" width="90" height="40"/><rect x="648" y="128" width="95" height="40"/><rect x="933" y="128" width="75" height="40"/><rect x="1098" y="128" width="90" height="40"/>
<rect x="563" y="540" width="90" height="35"/><rect x="563" y="590" width="90" height="35"/><rect x="1710" y="540" width="90" height="35"/><rect x="1710" y="590" width="90" height="35"/></g>
<g fill="none" stroke="#ececec" stroke-width="2.5">
 <path d="M530 370 H560 M580 370 V410 M620 370 V410 M660 370 V410 M700 370 V410 M540 425 H720 M550 440 V470 M590 440 V470 M630 440 V470 M670 440 V470 M710 440 V470 M590 505 H700 M520 540 H570 V525"/>
 <path d="M155 270 V405 M175 290 H210 M180 320 H210 M180 350 H210 M160 395 H255 M230 270 V330 M245 300 V380"/>
 <path d="M885 380 V430 M900 430 H950 M960 380 H1020 M1025 460 H1050 V500 M940 520 L960 700 M990 500 L1010 680 M1030 560 L1050 680"/>
 <path d="M1425 330 V400 M1450 400 H1590 M1520 380 V450 M1555 500 V680 M1580 550 H1600 M1660 350 H1700 M1700 350 V420 M1760 330 V420 M1820 360 V420"/>
 <path d="M1350 710 V840 M1370 720 V850 M1430 720 V850 M1450 760 H1470 M1500 740 V830 M1560 740 V830 M1620 760 V840 M1690 760 H1790"/>
 <path d="M45 315 H65 M65 870 V880 M1800 195 H1960 V215"/>
</g>
<g fill="none" stroke="#eaeaea" stroke-width="3">
 <path d="M65 190 H285 M1825 190 H2010 M65 190 V870 H2010"/>
 <path d="M45 315 V895 H2010"/>
 <path d="M285 190 V45 H1825 V190"/>
 <path d="M465 125 H1360 V170 M465 125 V170 H765 V190 M910 190 V170 H1190"/>
 <path d="M320 188 V220 H495 V188 M350 188 V220 M385 188 V220 M420 188 V220 M455 188 V220"/>
 <path d="M1395 188 V220 H1570 V188 M1425 188 V220 M1460 188 V220 M1500 188 V220 M1535 188 V220"/>
 <rect x="145" y="258" width="120" height="152"/><path d="M165 270 V400 M190 300 H240 M205 290 V380"/>
 <rect x="357" y="380" width="81" height="260"/><rect x="368" y="395" width="58" height="230"/>
 <path d="M368 395 L426 470 M426 395 L368 470 M368 475 L426 545 M426 475 L368 545 M368 550 L426 625 M426 550 L368 625"/>
 <rect x="183" y="518" width="75" height="28"/><rect x="258" y="518" width="50" height="45"/>
 <path d="M505 640 V315 H760 V520 H705 V680 H760 M505 520 H760 M505 410 H720 M540 370 H720 M560 535 H695 V630 H560 Z"/>
 <path d="M570 545 V625 M585 545 V625 M600 545 V625 M615 545 V625 M630 545 V625 M645 545 V625 M560 580 H655"/>
 <path d="M815 680 V315 H880 V680 H945 M880 370 H1030 V520 H1055 M930 470 H1000 V690 H1050 V740 H1075 M880 470 H940 M940 470 V680 M815 430 H870 M815 480 H870 M815 540 H870"/>
 <path d="M1000 520 V690 M1020 460 V700"/>
 <rect x="1160" y="600" width="80" height="200"/><path d="M1175 620 V790 M1195 640 H1230 M1200 700 V780"/>
 <path d="M1265 330 L1400 320 V470 L1270 440 Z M1300 380 L1350 400 M1330 340 A20 20 0 1 1 1380 350"/>
 <path d="M1415 315 H1600 V460 M1415 315 V700 M1440 350 V480 H1500 M1520 480 V700 H1600 V460 M1535 360 V470 M1380 520 V660 M1440 520 V650 H1480 M1560 500 V690"/>
 <path d="M1655 315 H1875 V430 H1805 V460 H1655 Z M1655 315 V700 H1730 V640 H1800 V700 H1875 V560 H1890 V520 H1840 V460 M1720 465 H1800 V640 H1720 Z M1710 580 H1810 M1720 520 L1800 480 M1720 480 L1800 520"/>
 <path d="M1740 540 V620 M1755 540 V620 M1770 540 V620 M1785 540 V620"/>
 <path d="M1340 860 V690 H1420 V860 M1410 700 V860 H1800 V730 H1550 M1480 710 V850 M1530 720 V850 M1600 730 V850 M1670 735 H1800 V860 M1685 740 L1790 850 M1790 740 L1685 850"/>
 <path d="M1895 315 H2010 M1910 315 V660 M1930 330 V650 M1910 500 H2010 M1920 380 L2000 470 M2000 380 L1920 470"/>
 <path d="M1930 700 V860 M1860 720 H1920 M1820 790 H1920"/>
</g>
<g fill="none" stroke="#eeeeee" stroke-width="3">
 <path d="M1270 340 L1410 460 M1360 420 L1400 460 M1420 600 V860 M1440 700 V860 M1480 760 H1520 M1545 700 H1600 M1600 730 V700"/>
</g>
</svg>
<!-- map markers -->
<svg class="a" style="left:600px;top:440px" width="330" height="40">
 <circle cx="12.9" cy="29.7" r="3.6" fill="#fff" stroke="#8d8d8d" stroke-width="1.1"/><circle cx="12.9" cy="29.7" r="2.2" fill="#129312"/>
 <circle cx="318.5" cy="11.6" r="4" fill="#fff" stroke="#1d921d" stroke-width="1.3"/><circle cx="318.5" cy="11.6" r="2.4" fill="#f2f200"/>
</svg>
<!-- faint map compass -->
<svg class="a" style="left:985px;top:172px" width="60" height="60" viewBox="-30 -30 60 60">
 <g transform="rotate(35)" fill="#e5e5e5">
  <circle r="13" fill="none" stroke="#e6e6e6" stroke-width="4" stroke-dasharray="16 4.4"/>
  <path d="M0 -22 L2.5 -2.5 L0 0 L-2.5 -2.5 Z M0 22 L2.5 2.5 L0 0 L-2.5 2.5 Z M-22 0 L-2.5 2.5 L0 0 L-2.5 -2.5 Z M22 0 L2.5 2.5 L0 0 L2.5 -2.5 Z"/>
  <path d="M-9 -9 L0 -1.5 L-1.5 0 Z M9 -9 L0 -1.5 L1.5 0 Z M-9 9 L0 1.5 L-1.5 0 Z M9 9 L0 1.5 L1.5 0 Z"/>
  <circle r="2.3" fill="#fff"/>
  <g font-family="Liberation Sans" font-size="7" text-anchor="middle" fill="#e6e6e6"><text x="0" y="-23">N</text><text x="0" y="29">S</text><text x="-26" y="3">W</text><text x="26" y="3">E</text></g>
 </g>
</svg>

<div class="a" style="left:1026px;top:239.8px;width:428.2px;height:381px;background:#fff;border:1px solid rgba(0,0,0,.2);border-radius:6px 6px 0 0;box-shadow:0 5px 15px rgba(0,0,0,.5)"></div>
<div class="a" style="left:1044.2px;top:260.9px;font-size:19.5px;color:#5b6368">Camera:Demo 125 - NY Stair</div>
<svg class="a" style="left:1424px;top:261px" width="15" height="15"><path d="M2.5 2.5 L12 12 M12 2.5 L2.5 12" stroke="#c5c5c5" stroke-width="2.4"/></svg>
<div class="a" style="left:1027.7px;top:301.6px;width:425.3px;height:24.3px;background:#000"></div>
<svg class="a" style="left:1027px;top:301px" width="427" height="26">
 <circle cx="12.9" cy="14.8" r="5.9" fill="#068606"/>
 <path d="M25.5 19.3 H38.5 Q40.5 19.3 40.5 17 Q40.5 14.8 38.2 14.6 Q37.8 10.5 33.5 10.5 Q30.5 10.5 29.3 13 Q27.9 12.6 26.9 13.7 Q26.2 14.5 26.5 15.4 Q24.7 15.9 24.7 17.4 Q24.7 19.3 25.5 19.3 Z" fill="#adadad"/>
 <g fill="#bdbdbd">
  <rect x="265" y="8.7" width="11" height="1.6"/><rect x="268.5" y="6.2" width="4" height="3" fill="none" stroke="#bdbdbd" stroke-width="1.1"/>
  <path d="M266 11 H275 L274.3 19.6 H266.7 Z"/>
  <rect x="298" y="9.2" width="15" height="1.3"/><rect x="298" y="13.2" width="15" height="1.3"/><rect x="298" y="17.2" width="15" height="1.3"/>
  <rect x="307.5" y="7.8" width="2.6" height="4"/><rect x="300.5" y="11.8" width="2.6" height="4"/><rect x="307.5" y="15.8" width="2.6" height="4"/>
  <circle cx="376.5" cy="14.3" r="6.5"/>
  <path d="M404 21.5 V16.2 L406 18.2 L414.8 9.4 L412.8 7.4 H418.1 V12.7 L416.1 10.7 L407.3 19.5 L409.3 21.5 Z"/>
 </g>
 <g fill="#000"><circle cx="376.5" cy="11" r="1.1"/><path d="M375 13 H377.4 V17.4 H378.4 V18.6 H375 V17.4 H376 V14.2 H375 Z"/></g>
 <g stroke="#000" stroke-width="0.9"><path d="M268.3 12.3 V18.6 M270.5 12.3 V18.6 M272.7 12.3 V18.6"/></g>
 <path d="M342 8 A6.6 6.6 0 1 1 335.8 12.4" fill="none" stroke="#bdbdbd" stroke-width="1.9"/>
 <path d="M333.3 9.4 L339.2 10.2 L335.2 14.8 Z" fill="#bdbdbd"/>
</svg>
<div class="a" style="left:1071.6px;top:308.2px;font-size:15px;color:#dcdcdc">Demo 125 - NY Stair</div>
<svg class="a" style="left:1025px;top:320px;filter:blur(0.4px)" width="430" height="295" viewBox="0 0 1456 999">
 <defs><clipPath id="cc"><rect x="9" y="20" width="1440" height="965"/></clipPath>
 <linearGradient id="gl" x1="0" y1="0" x2="1" y2="1"><stop offset="0" stop-color="#c0c0ba"/><stop offset="1" stop-color="#c6c6c2"/></linearGradient>
 <linearGradient id="gw" x1="0" y1="0" x2="0" y2="1"><stop offset="0" stop-color="#d6d6d4"/><stop offset="1" stop-color="#d0d0ce"/></linearGradient>
 <linearGradient id="gr" x1="0" y1="0" x2="0" y2="1"><stop offset="0" stop-color="#b3b6ba"/><stop offset="1" stop-color="#a6a9ad"/></linearGradient>
 <linearGradient id="gf" x1="0" y1="0" x2="1" y2="1"><stop offset="0" stop-color="#55585c"/><stop offset="1" stop-color="#45484c"/></linearGradient>
 </defs>
 <g clip-path="url(#cc)">
  <rect x="0" y="0" width="1456" height="999" fill="#c9cacb"/>
  <path d="M0 0 H345 L345 25 L270 45 L0 140 Z" fill="#eaeae6"/>
  <path d="M0 125 L270 45 L410 625 L165 770 L0 560 Z" fill="url(#gl)"/>
  <path d="M270 45 L345 25 L480 650 L410 625 Z" fill="#c8c8c2"/><path d="M335 30 L350 27 L485 648 L470 645 Z" fill="#dcdcd6"/>
  <path d="M345 25 H760 L750 460 L480 650 Z" fill="url(#gw)"/>
  <path d="M760 20 H1110 L1040 440 L950 470 L930 590 L750 460 Z" fill="url(#gr)"/>
  <path d="M1110 0 H1456 V330 L1200 830 L960 700 L990 470 L1040 440 Z" fill="#42454a"/>
  <path d="M1110 0 H1280 L1000 470 L1040 440 Z" fill="#5a5d61"/>
  <path d="M165 770 L410 625 L480 650 L750 460 L930 590 L960 700 L1200 830 L1070 999 H280 Z" fill="url(#gf)"/>
  <path d="M0 560 L165 770 L300 999 H0 Z" fill="#dfe1e3"/>
  <path d="M1456 330 V999 H1070 L1200 830 Z" fill="#dcdee0"/>
  <path d="M1456 880 V999 H1380 Z" fill="#eef0f0"/>
  <g fill="none" stroke-linecap="round">
   <path d="M1280 20 L1000 470" stroke="#d9ddc9" stroke-width="9"/>
   <path d="M1450 340 L1180 830" stroke="#d2d6c2" stroke-width="9"/>
   <path d="M1106 20 L1034 420" stroke="#e9ebe4" stroke-width="11"/>
   <path d="M100 645 L355 500" stroke="#e4e4e2" stroke-width="5"/>
   <path d="M270 45 L410 625" stroke="#9c9c9a" stroke-width="3"/>
   <path d="M410 625 L165 770" stroke="#8f8f8f" stroke-width="3"/>
  </g>
  <rect x="525" y="228" width="37" height="47" rx="4" fill="#7a7a78"/>
  <rect x="975" y="355" width="35" height="55" rx="4" fill="#8a8a88"/>
  <rect x="330" y="440" width="28" height="55" rx="4" fill="#8e8e8c"/>
  <g stroke="#cfd3c2" stroke-width="4" fill="none">
   <path d="M1325 60 l-12 12 M1300 110 l-14 14 M1275 160 l-15 15 M1245 220 l-15 15 M1215 280 l-16 16 M1180 340 l-16 16 M1140 410 l-17 17 M1100 480 l-17 17 M1060 550 l-18 18 M1010 620 l-18 18 M980 660 l-15 15"/>
  </g>
  <g stroke="#55595e" stroke-width="3" fill="none" opacity="0.6">
   <path d="M1325 75 L1450 100 M1300 125 L1450 160 M1275 180 L1450 220 M1245 240 L1450 285 M1215 300 L1420 350 M1180 360 L1390 410 M1140 430 L1360 470 M1100 500 L1330 540 M1060 570 L1300 610 M1010 640 L1270 680 M980 700 L1240 740"/>
  </g>
 </g>
</svg>

<div class="a" style="left:1027.7px;top:610.8px;width:425.3px;height:9.2px;background:#000"></div>
<div class="a" style="left:1030px;top:611px;font-family:'Liberation Mono',monospace;font-size:9px;color:#e8e8e8;transform:scaleX(0.845);transform-origin:0 0">2023-12-14  19-07-33</div>
<svg class="a" style="left:1443px;top:610px" width="14" height="14"><path d="M12.5 1.5 V12.5 H2" fill="none" stroke="#888" stroke-width="2.6"/></svg>



<!-- RIGHT PANEL -->
<div class="panel" style="left:1603px;top:101px;width:435px;height:886px"></div>
<div class="a" style="left:1619px;top:106px;width:107px;height:35.5px;background:#0052ba;border-radius:4px 4px 0 0"></div>
<svg class="a" style="left:1628px;top:117px" width="20" height="18" viewBox="0 0 20 18">
 <g fill="none" stroke="#fff" stroke-width="0.9">
  <rect x="6.5" y="1.5" width="7" height="14"/><rect x="2.5" y="5.5" width="4" height="10"/><rect x="13.5" y="7.5" width="3.5" height="8"/>
  <path d="M8.5 3 V14 M11.5 3 V14 M7 5.5 H13 M7 9 H13 M7 12.5 H13 M4.5 7 V14 M1 15.5 H18 M8 17 H12"/>
 </g>
</svg>
<div class="a" style="left:1649.2px;top:117.2px;font-size:14.5px;color:#fff">Alarms</div>
<svg class="a" style="left:1698px;top:119px" width="13" height="12" viewBox="0 0 13 12">
 <path d="M1 4 H3.5 L7 1 V11 L3.5 8 H1 Z" fill="#fff"/>
 <path d="M8.5 4 Q9.7 6 8.5 8 M10 2.5 Q12.3 6 10 9.5" fill="none" stroke="#fff" stroke-width="1.1"/>
</svg>
<div class="a" style="left:1741.6px;top:117.2px;font-size:14.5px;color:#141414">Devices</div>
<div class="a" style="left:1618px;top:140.5px;width:416px;height:2px;background:#676e72"></div>
<div class="a" style="left:1729.8px;top:140px;width:79px;height:2px;background:#2a6fd0"></div>
<svg class="a" style="left:2016px;top:113px" width="18" height="20" viewBox="0 0 18 20">
 <path d="M10.5 5 V3.5 Q10.5 2.5 9.5 2.5 H2.8 Q1.5 2.5 1.5 3.8 V16 Q1.5 17.3 2.8 17.3 H9.5 Q10.5 17.3 10.5 16.3 V14.5" fill="none" stroke="#6b7276" stroke-width="1.3"/>
 <path d="M15.5 9.9 L11 6 V8.6 H6.5 V11.2 H11 V13.8 Z" fill="#6b7276"/>
</svg>
<div class="a" style="left:1771.5px;top:156.9px;font-size:15.2px;color:#6a7176">Nothing to show</div>


</body></html>
